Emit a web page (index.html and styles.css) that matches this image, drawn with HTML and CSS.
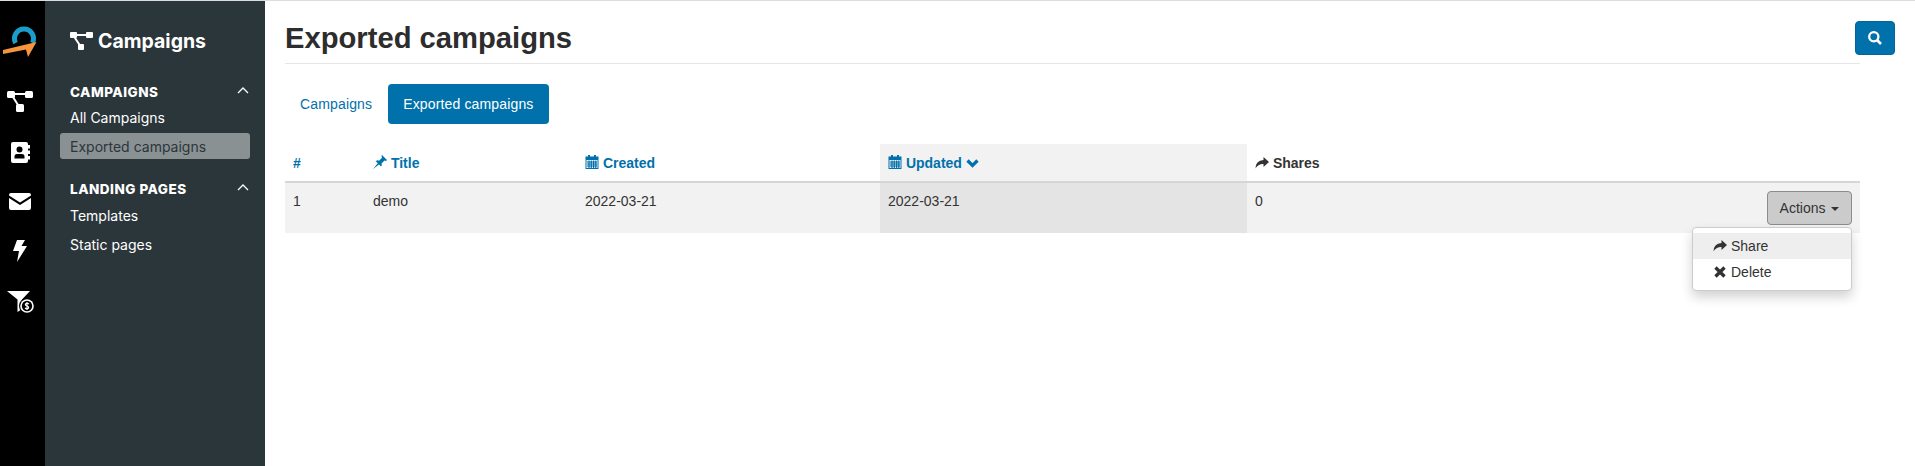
FILE: index.html
```html
<!DOCTYPE html>
<html lang="en">
<head>
  <meta charset="UTF-8">
  <title>Exported campaigns</title>
  <link rel="stylesheet" href="styles.css">
</head>
<body>
  <nav class="rail">
    <svg class="rail-logo" viewBox="0 0 40 35" width="40" height="35">
      <path d="M15.600 18 A9.500 9.500 0 1 1 32.400 18" fill="none" stroke="#1b9dcb" stroke-width="5"/>
      <path d="M3 25 L36.500 17 L28 32 L26 24.500 L3 29 Z" fill="#f7953f"/>
    </svg>
    <svg class="rail-icon" viewBox="0 0 26 22" width="26" height="22">
      <path d="M4 4 H22 M4 4 L13 18" stroke="#fff" stroke-width="2" fill="none"/>
      <rect x="0" y="1" width="8" height="7" rx="1.5" fill="#fff"/>
      <rect x="18" y="1" width="8" height="7" rx="1.5" fill="#fff"/>
      <rect x="9" y="14" width="8" height="8" rx="1.5" fill="#fff"/>
    </svg>
    <svg class="rail-icon" viewBox="0 0 20 21" width="20" height="21">
      <path fill-rule="evenodd" fill="#fff" d="M3 0 H16 A2 2 0 0 1 18 2 V19 A2 2 0 0 1 16 21 H3 A2 2 0 0 1 1 19 V2 A2 2 0 0 1 3 0 Z M9.500 4.500 A3 3 0 1 0 9.500 10.500 A3 3 0 1 0 9.500 4.500 Z M4.500 16.500 H14.500 V14.500 Q14.500 12 12 12 H7 Q4.500 12 4.500 14.500 Z"/>
      <rect x="18" y="3" width="2" height="3.500" fill="#fff"/>
      <rect x="18" y="8.500" width="2" height="3.500" fill="#fff"/>
      <rect x="18" y="14" width="2" height="3.500" fill="#fff"/>
    </svg>
    <svg class="rail-icon" viewBox="0 0 22 17" width="22" height="17">
      <path fill="#fff" d="M2 0 H20 A2 2 0 0 1 22 2 V2.500 L11 9.500 L0 2.500 V2 A2 2 0 0 1 2 0 Z"/>
      <path fill="#fff" d="M0 5 L11 12 L22 5 V15 A2 2 0 0 1 20 17 H2 A2 2 0 0 1 0 15 Z"/>
    </svg>
    <svg class="rail-icon rail-bolt" viewBox="0 0 14 22" width="14" height="22">
      <path fill="#fff" d="M4 0 H12 L8.500 6 H14 L4 22 L6 11 H0 Z"/>
    </svg>
    <svg class="rail-icon" viewBox="0 0 27 23" width="27" height="23">
      <path fill="#fff" d="M0 1 H23 L15 9.500 V19 L10.500 22 V9.500 Z"/>
      <circle cx="20" cy="16" r="8" fill="#000"/>
      <circle cx="20" cy="16" r="6.800" fill="#fff"/>
      <circle cx="20" cy="16" r="5.200" fill="#000"/>
      <path d="M22 14 Q20 12.500 18.500 14 Q18 15.500 20 16 Q22 16.500 21.500 18 Q20 19.500 18 18 M20 12 V20" stroke="#fff" stroke-width="1.200" fill="none"/>
    </svg>
  </nav>

  <aside class="sidebar">
    <h2 class="sidebar-title">
      <svg viewBox="0 0 23 18" width="23" height="18">
        <path d="M3 3 H20 M3 3 L11 15" stroke="#fff" stroke-width="2" fill="none"/>
        <rect x="0" y="0" width="7" height="6" rx="1" fill="#fff"/>
        <rect x="16" y="0" width="7" height="6" rx="1" fill="#fff"/>
        <rect x="8" y="12" width="6" height="6" rx="1" fill="#fff"/>
      </svg>
      Campaigns
    </h2>

    <div class="side-head side-head-first">
      <span>CAMPAIGNS</span>
      <svg viewBox="0 0 12 7" width="12" height="7"><path d="M1 6 L6 1 L11 6" fill="none" stroke="#fff" stroke-width="1.300"/></svg>
    </div>
    <a class="side-link">All Campaigns</a>
    <a class="side-link side-link-active">Exported campaigns</a>

    <div class="side-head">
      <span>LANDING PAGES</span>
      <svg viewBox="0 0 12 7" width="12" height="7"><path d="M1 6 L6 1 L11 6" fill="none" stroke="#fff" stroke-width="1.300"/></svg>
    </div>
    <a class="side-link">Templates</a>
    <a class="side-link">Static pages</a>
  </aside>

  <main class="content">
    <header class="page-header">
      <h1>Exported campaigns</h1>
      <button class="search-btn">
        <svg viewBox="0 0 14 14" width="14" height="14"><circle cx="5.800" cy="5.800" r="4.600" fill="none" stroke="#fff" stroke-width="2.300"/><path d="M9 9 L13 13" stroke="#fff" stroke-width="2.600"/></svg>
      </button>
    </header>

    <div class="tabs">
      <a class="tab">Campaigns</a>
      <a class="tab tab-active">Exported campaigns</a>
    </div>

    <table class="data-table">
      <colgroup>
        <col class="col-num">
        <col class="col-title">
        <col class="col-created">
        <col class="col-updated">
        <col>
      </colgroup>
      <thead>
        <tr>
          <th>#</th>
          <th>
            <svg class="th-icon" viewBox="0 0 14 14" width="14" height="14"><path fill="#0071ab" d="M9 0 L14 5 L13 6 L11.500 5.500 L8.500 8.500 Q9.500 10.500 8 11.500 L2.800 6.300 Q4.200 4.800 6 5.700 L9 2.700 L8.500 1 Z M4.800 8.200 L0 14 L6 9.400 Z"/></svg>
            Title
          </th>
          <th>
            <svg class="th-icon" viewBox="0 0 14 14" width="14" height="14"><path fill="#0071ab" fill-rule="evenodd" d="M3 0 H5 V1.500 H9 V0 H11 V1.500 H13.500 V14 H0.500 V1.500 H3 Z M1.500 5 V13 H12.500 V5 Z"/><path stroke="#0071ab" stroke-width="1.200" d="M2 7 H12 M2 9 H12 M2 11 H12 M4 5.500 V13 M6.300 5.500 V13 M8.600 5.500 V13 M10.800 5.500 V13"/></svg>
            Created
          </th>
          <th class="sorted">
            <svg class="th-icon" viewBox="0 0 14 14" width="14" height="14"><path fill="#0071ab" fill-rule="evenodd" d="M3 0 H5 V1.500 H9 V0 H11 V1.500 H13.500 V14 H0.500 V1.500 H3 Z M1.500 5 V13 H12.500 V5 Z"/><path stroke="#0071ab" stroke-width="1.200" d="M2 7 H12 M2 9 H12 M2 11 H12 M4 5.500 V13 M6.300 5.500 V13 M8.600 5.500 V13 M10.800 5.500 V13"/></svg>
            Updated
            <svg class="th-chevron" viewBox="0 0 13 9" width="13" height="9"><path d="M1.500 1.500 L6.500 6.500 L11.500 1.500" fill="none" stroke="#0071ab" stroke-width="3.200"/></svg>
          </th>
          <th class="plain">
            <svg class="th-icon" viewBox="0 0 14 12" width="14" height="12"><path fill="#333" d="M8.500 0 L14 5 L8.500 10 V7 Q3 6.800 0.500 11.500 Q0.500 3.500 8.500 3 Z"/></svg>
            Shares
          </th>
        </tr>
      </thead>
      <tbody>
        <tr>
          <td>1</td>
          <td>demo</td>
          <td>2022-03-21</td>
          <td class="sorted">2022-03-21</td>
          <td>
            <div class="cell-row">
              0
              <div class="actions">
                <button class="actions-btn">Actions <span class="caret"></span></button>
                <ul class="menu">
                  <li class="menu-hover">
                    <svg viewBox="0 0 14 12" width="14" height="12"><path fill="#333" d="M8.500 0 L14 5 L8.500 10 V7 Q3 6.800 0.500 11.500 Q0.500 3.500 8.500 3 Z"/></svg>
                    Share
                  </li>
                  <li>
                    <svg viewBox="0 0 14 12" width="14" height="12"><path d="M2.500 1.500 L11.500 10.500 M11.500 1.500 L2.500 10.500" stroke="#333" stroke-width="3.400" fill="none"/></svg>
                    Delete
                  </li>
                </ul>
              </div>
            </div>
          </td>
        </tr>
      </tbody>
    </table>
  </main>
</body>
</html>
```

FILE: styles.css
```css
* {
  box-sizing: border-box;
}

html, body {
  height: 100%;
}

body {
  margin: 0;
  display: flex;
  overflow: hidden;
  background-color: #fff;
  border-top: 1px solid #ddd;
  font-family: "Liberation Sans", Arial, sans-serif;
  font-size: 14px;
  color: #333;
}

/* Icon rail */
.rail {
  width: 45px;
  flex-shrink: 0;
  display: flex;
  flex-direction: column;
  align-items: center;
  gap: 30px;
  padding: 24px 5px 0 0;
  background-color: #000;
}

.rail svg {
  display: block;
  flex-shrink: 0;
}

.rail-bolt {
  margin-bottom: -2px;
}

/* Sidebar */
.sidebar {
  width: 220px;
  flex-shrink: 0;
  padding: 0 15px;
  background-color: #2b363b;
  color: #fff;
  font-family: Inter, "Open Sans", sans-serif;
}

.sidebar-title {
  display: flex;
  align-items: center;
  gap: 5px;
  margin: 28px 0 0 10px;
  font-size: 19.500px;
  font-weight: 700;
  line-height: 24px;
}

.side-head {
  display: flex;
  align-items: center;
  justify-content: space-between;
  height: 22px;
  margin: 18px 1px 0 10px;
  padding-top: 2px;
  font-size: 13.500px;
  font-weight: 800;
  letter-spacing: 0.5px;
}

.side-head svg {
  margin-top: -4px;
}

.side-head-first {
  height: 20px;
  margin-top: 28px;
}

.side-link {
  display: block;
  height: 26px;
  margin-top: 3px;
  padding-left: 10px;
  font-size: 14px;
  line-height: 28px;
  border-radius: 3px;
}

.side-link-active {
  background-color: #8a9193;
  color: #2b363b;
}

/* Main */
.content {
  flex-grow: 1;
  padding: 0 55px 0 20px;
}

.page-header {
  display: flex;
  justify-content: space-between;
  height: 63px;
  border-bottom: 1px solid #e6e6e6;
}

.page-header h1 {
  margin: 20px 0 0;
  font-size: 29.200px;
  font-weight: 700;
  line-height: 34px;
  color: #2d2d2d;
}

.search-btn {
  display: flex;
  align-items: center;
  justify-content: center;
  width: 40px;
  height: 34px;
  margin: 20px -35px 0 0;
  padding: 0;
  background-color: #0071ab;
  border: 1px solid #00669a;
  border-radius: 4px;
}

.tabs {
  display: flex;
  gap: 1px;
  margin-top: 20px;
}

.tab {
  height: 40px;
  padding: 0 15px;
  line-height: 40px;
  font-size: 14px;
  letter-spacing: 0.15px;
  color: #0071ab;
  border-radius: 4px;
}

.tab-active {
  background-color: #0071ab;
  color: #fff;
}

/* Table */
.data-table {
  width: 100%;
  margin-top: 20px;
  border-collapse: collapse;
  table-layout: fixed;
}

.col-num { width: 80px; }
.col-title { width: 212px; }
.col-created { width: 303px; }
.col-updated { width: 367px; }

.data-table th {
  height: 38px;
  padding: 8px;
  text-align: left;
  font-size: 14px;
  font-weight: 700;
  color: #0071ab;
  border-bottom: 2px solid #d6d6d6;
}

.data-table th.plain {
  color: #333;
}

.data-table td {
  padding: 8px;
  vertical-align: top;
  line-height: 20px;
  background-color: #f2f2f2;
}

.data-table th.sorted {
  background-color: #f2f2f2;
}

.data-table td.sorted {
  background-color: #e4e4e4;
}

.th-icon {
  vertical-align: -1px;
}

.th-chevron {
  vertical-align: 0;
}

.cell-row {
  display: flex;
  justify-content: space-between;
}

/* Actions dropdown */
.actions {
  position: relative;
}

.actions-btn {
  display: block;
  width: 85px;
  height: 34px;
  padding: 0;
  font-family: inherit;
  font-size: 14px;
  color: #333;
  background-color: #cbcbcb;
  border: 1px solid #8c8c8c;
  border-radius: 4px;
}

.caret {
  display: inline-block;
  margin-left: 2px;
  vertical-align: middle;
  border-top: 4px solid #333;
  border-left: 4px solid transparent;
  border-right: 4px solid transparent;
}

.menu {
  position: absolute;
  top: 36px;
  right: 0;
  width: 160px;
  margin: 0;
  padding: 5px 0;
  list-style: none;
  background-color: #fff;
  border: 1px solid #ccc;
  border-radius: 4px;
  box-shadow: 0 6px 12px rgba(0, 0, 0, 0.18);
}

.menu li {
  display: flex;
  align-items: center;
  gap: 4px;
  height: 26px;
  padding-left: 20px;
  font-size: 14px;
  color: #333;
}

.menu-hover {
  background-color: #eee;
}
```
